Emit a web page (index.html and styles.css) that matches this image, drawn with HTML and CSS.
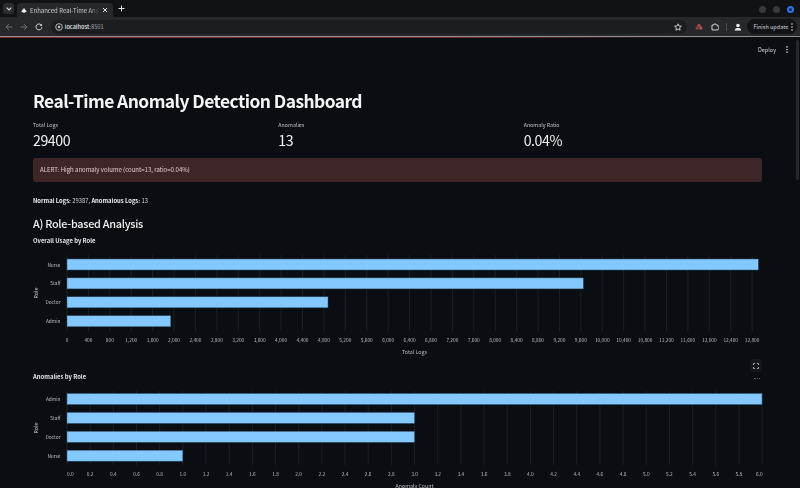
FILE: index.html
```html
<!DOCTYPE html>
<html>
    <head>
        <meta charset="utf-8" />
        <meta name="viewport" content="width=device-width, initial-scale=1.0">
        <title>Enhanced Real-Time Anomaly Detection</title>
        <link rel="stylesheet" href="styles.css">
    </head>
    <body>
        <div class="tabstrip">
            <div class="tablist">
                <svg width="6" height="4" viewBox="0 0 6 4"><path d="M.7.7 3 3l2.3-2.3" fill="none" stroke="#d8dade" stroke-width="1.1"/></svg>
            </div>
            <div class="tab">
                <svg class="favicon" width="6" height="5" viewBox="0 0 6 5"><path d="M3 0 .2 3.6 3 5l2.8-1.4z" fill="#e8e8e8"/></svg>
                <span class="tabtitle">Enhanced Real-Time Ano</span>
                <svg class="tabclose" width="6" height="6" viewBox="0 0 6 6"><path d="m1 1 4 4M5 1 1 5" stroke="#e3e4e6" stroke-width="1"/></svg>
            </div>
            <svg class="newtab" width="7" height="7" viewBox="0 0 7 7"><path d="M3.500.5v6M.5 3.500h6" stroke="#e3e4e6" stroke-width="1"/></svg>
            <div class="winbtns">
                <span class="winbtn"></span>
                <span class="winbtn"></span>
                <span class="winbtn winbtn-on"></span>
            </div>
        </div>

        <div class="toolbar">
            <svg class="navicon" width="8" height="8" viewBox="0 0 8 8"><path d="M7.500 4H1M4 1 1 4l3 3" fill="none" stroke="#6d6f73" stroke-width="1"/></svg>
            <svg class="navicon" width="8" height="8" viewBox="0 0 8 8"><path d="M.5 4H7M4 1l3 3-3 3" fill="none" stroke="#6d6f73" stroke-width="1"/></svg>
            <svg class="navicon" width="8" height="8" viewBox="0 0 8 8"><path d="M6.600 2.400A3 3 0 1 0 7 4.200" fill="none" stroke="#d4d6d9" stroke-width="1"/><path d="M7 .6v2.500H4.600z" fill="#d4d6d9"/></svg>
            <div class="omnibox">
                <svg width="8" height="8" viewBox="0 0 8 8"><circle cx="4" cy="4" r="3.300" fill="none" stroke="#c8cacd" stroke-width=".9"/><circle cx="4" cy="4" r="1.200" fill="#c8cacd"/></svg>
                <span class="url">localhost<span class="urlport">:8501</span></span>
                <svg class="star" width="8" height="8" viewBox="0 0 8 8"><path d="m4 .8 1 2.200 2.400.2-1.800 1.600.5 2.400L4 6 1.900 7.200l.5-2.400L.6 3.200 3 3z" fill="none" stroke="#d4d6d9" stroke-width=".9"/></svg>
            </div>
            <svg class="ext" width="8" height="8" viewBox="0 0 8 8"><circle cx="4" cy="2.300" r="1.700" fill="#a8464a"/><circle cx="2.200" cy="5" r="1.700" fill="#8f3d40"/><circle cx="5.800" cy="5" r="1.700" fill="#b8524f"/></svg>
            <svg class="ext" width="8" height="8" viewBox="0 0 8 8"><path d="M1 2h1.800a1.200 1.200 0 0 1 2.400 0H7v1.800a1.200 1.200 0 0 1 0 2.400V7H1z" fill="none" stroke="#d4d6d9" stroke-width="1"/></svg>
            <span class="toolsep"></span>
            <svg class="profile" width="8" height="8" viewBox="0 0 8 8"><circle cx="4" cy="2.400" r="1.800" fill="#eceef0"/><path d="M.6 7.600C1 5.600 2.400 5 4 5s3 .6 3.400 2.600z" fill="#eceef0"/></svg>
            <div class="finish">
                <span>Finish update</span>
                <svg width="2" height="8" viewBox="0 0 2 8"><circle cx="1" cy="1" r=".8" fill="#d4d6d9"/><circle cx="1" cy="4" r=".8" fill="#d4d6d9"/><circle cx="1" cy="7" r=".8" fill="#d4d6d9"/></svg>
            </div>
        </div>
        <div class="accent"></div>

        <div class="page">
            <div class="apphead">
                <span class="deploy">Deploy</span>
                <svg width="2" height="7" viewBox="0 0 2 7"><circle cx="1" cy=".9" r=".8" fill="#d0d2d5"/><circle cx="1" cy="3.500" r=".8" fill="#d0d2d5"/><circle cx="1" cy="6.100" r=".8" fill="#d0d2d5"/></svg>
            </div>

            <div class="main">
                <h1>Real-Time Anomaly Detection Dashboard</h1>

                <div class="metrics">
                    <div>
                        <div class="metric-label">Total Logs</div>
                        <div class="metric-value">29400</div>
                    </div>
                    <div>
                        <div class="metric-label">Anomalies</div>
                        <div class="metric-value">13</div>
                    </div>
                    <div>
                        <div class="metric-label">Anomaly Ratio</div>
                        <div class="metric-value">0.04%</div>
                    </div>
                </div>

                <div class="alert">ALERT: High anomaly volume (count=13, ratio=0.04%)</div>

                <p class="counts"><b>Normal Logs:</b> 29387, <b>Anomalous Logs:</b> 13</p>

                <h2>A) Role-based Analysis</h2>

                <h4>Overall Usage by Role</h4>
                <div class="chart" id="ChartUsage"></div>

                <div class="chartwrap">
                    <h4>Anomalies by Role</h4>
                    <div class="chartbtn">
                        <svg width="6" height="6" viewBox="0 0 6 6"><path d="M.5 2V.5H2M4 .5h1.500V2M5.500 4v1.500H4M2 5.500H.5V4" fill="none" stroke="#b4b7bb" stroke-width=".9"/></svg>
                    </div>
                    <div class="chartdots"></div>
                    <div class="chart" id="ChartAnomaly"></div>
                </div>
            </div>

            <div class="scrollbar"></div>
        </div>

        <script src="chart.js"></script>
    </body>
</html>
```

FILE: styles.css
```css
*
{
    box-sizing: border-box;
}

html, body
{
    height: 100%;
    margin: 0;
    overflow: hidden;
}

body
{
    font-family: "Noto Sans CJK JP", "Noto Sans", sans-serif;
    background-color: #0a0d11;
    color: #f3f4f6;
    filter: blur(.3px);
}

/* browser chrome */

.tabstrip
{
    display: flex;
    align-items: flex-end;
    height: 17px;
    padding-left: 3px;
    background-color: #111215;
}

.tablist
{
    display: flex;
    align-items: center;
    justify-content: center;
    width: 11px;
    height: 11px;
    margin-bottom: 3px;
    border-radius: 3px;
    background-color: #2b2d30;
}

.tab
{
    display: flex;
    align-items: center;
    width: 96px;
    height: 14px;
    margin-left: 3px;
    padding: 0 5px 0 4px;
    border-radius: 4px 4px 0 0;
    background-color: #26282b;
}

.favicon
{
    margin-right: 3px;
}

.tabtitle
{
    flex: 1;
    overflow: hidden;
    white-space: nowrap;
    font-size: 6px;
    color: #c9cbce;
    -webkit-mask-image: linear-gradient(90deg, #000 85%, transparent 100%);
    mask-image: linear-gradient(90deg, #000 85%, transparent 100%);
}

.tabclose
{
    margin-left: 3px;
}

.newtab
{
    margin: 0 0 5px 5px;
}

.winbtns
{
    display: flex;
    gap: 7px;
    margin-left: auto;
    margin-right: 6px;
    margin-bottom: 4px;
}

.winbtn
{
    width: 7px;
    height: 7px;
    border-radius: 50%;
    background-color: #37393c;
}

.winbtn-on
{
    border: 2px solid #2b74e6;
    background-color: #13294d;
}

.toolbar
{
    display: flex;
    align-items: center;
    height: 19px;
    padding: 0 3px 0 5px;
    background-color: #26282b;
}

.navicon
{
    margin-right: 7px;
}

.omnibox
{
    display: flex;
    align-items: center;
    width: 643px;
    height: 14px;
    margin-left: 1px;
    padding: 0 5px 0 4px;
    border-radius: 7px;
    background-color: #1b1d20;
}

.url
{
    margin-left: 2px;
    font-size: 5.600px;
    font-weight: 500;
    color: #e6e8ea;
}

.urlport
{
    color: #8d8f93;
}

.star
{
    margin-left: auto;
}

.ext
{
    margin-left: 8px;
}

.toolsep
{
    width: 1px;
    height: 8px;
    margin-left: 7px;
    background-color: #4a4c50;
}

.profile
{
    margin-left: 7px;
}

.finish
{
    display: flex;
    align-items: center;
    justify-content: space-between;
    width: 50px;
    height: 15px;
    margin-left: 6px;
    padding: 0 4px 0 6px;
    border-radius: 8px;
    background-color: #111316;
    white-space: nowrap;
    font-size: 5.500px;
    color: #d4d6d9;
}

.accent
{
    height: 2px;
    border-top: 1px solid #8e9094;
    background: linear-gradient(90deg, #8a2a25 0%, #7a2a25 55%, #2a1b1b 80%, #0a0d11 100%);
}

/* page */

.page
{
    position: relative;
    height: 450px;
    overflow: hidden;
}

.apphead
{
    display: flex;
    align-items: center;
    justify-content: flex-end;
    gap: 10px;
    height: 21px;
    padding: 2px 12px 0 0;
}

.deploy
{
    font-size: 5.500px;
    color: #d8dadc;
}

.main
{
    padding: 28px 38px 0 33px;
}

h1
{
    margin: 0;
    font-size: 17.400px;
    font-weight: 700;
    letter-spacing: -.55px;
    line-height: 28px;
    color: #f4f5f6;
}

.metrics
{
    display: grid;
    grid-template-columns: repeat(3, 1fr);
    width: 736px;
    margin-top: 5px;
}

.metric-label
{
    font-size: 5.300px;
    line-height: 10px;
    color: #bfc2c7;
}

.metric-value
{
    font-size: 14.200px;
    letter-spacing: -.45px;
    line-height: 21px;
    color: #f0f1f3;
}

.alert
{
    height: 24px;
    margin-top: 7px;
    padding-left: 7px;
    border-radius: 3px;
    background-color: #3e2528;
    font-size: 6px;
    line-height: 24px;
    color: #e2c9c9;
}

.counts
{
    margin: 13px 0 0;
    font-size: 5.830px;
    line-height: 11px;
    color: #d8dadd;
}

.counts b
{
    font-weight: 700;
    color: #eceef0;
}

h2
{
    margin: 9px 0 0;
    font-size: 10.800px;
    font-weight: 500;
    letter-spacing: -.25px;
    line-height: 17px;
    color: #f0f1f3;
}

h4
{
    margin: 3px 0 0;
    font-size: 5.900px;
    font-weight: 700;
    line-height: 11px;
    color: #e2e4e7;
}

.chart
{
    margin-top: 6px;
}

.chart svg
{
    display: block;
    overflow: visible;
}

.chartwrap
{
    position: relative;
    margin-top: 19px;
}

.chartbtn
{
    position: absolute;
    right: 0;
    top: -12px;
    display: flex;
    align-items: center;
    justify-content: center;
    width: 12px;
    height: 13px;
    border-radius: 3px;
    background-color: #13161a;
}

.chartdots
{
    position: absolute;
    right: 2px;
    top: 7px;
    width: 6px;
    border-top: 1px dotted #555a60;
}

.scrollbar
{
    position: absolute;
    right: 1px;
    top: 2px;
    width: 3px;
    height: 140px;
    border-radius: 2px;
    background-color: #24272b;
}

/* chart parts, svg attributes come from chart.js */

.grid
{
    stroke: #1c2026;
    stroke-width: 1;
}

.bar
{
    fill: #83c9ff;
    stroke: #34536d;
    stroke-width: .5;
}

.ticktxt
{
    font-size: 4.800px;
    fill: #bcbfc3;
}

.axistxt
{
    font-size: 5.300px;
    fill: #bcbfc3;
}

.roletxt
{
    font-size: 5.300px;
    fill: #c3c6ca;
}
```

FILE: chart.js
```js
var SVGNS = "http://www.w3.org/2000/svg";

function Add(Parent, Tag, Attr, Text)
{
    var El = document.createElementNS(SVGNS, Tag);
    for (var K in Attr)
    {
        El.setAttribute(K, Attr[K]);
    }
    if (Text)
    {
        El.textContent = Text;
    }
    Parent.appendChild(El);
    return El;
}

// all x and y are relative to the chart box, which starts at page x=33
function DrawChart(Id, C)
{
    var Svg = Add(document.getElementById(Id), "svg", { width: 729, height: C.H });
    var X0 = 34;

    for (var I = 0; I < C.Ticks.length; I++)
    {
        var X = X0 + I * C.Step;
        Add(Svg, "line", { "class": "grid", x1: X, x2: X, y1: C.GridTop, y2: C.GridBot });
        var Lx = X;
        var Anchor = "middle";
        if (I == 0 && C.Ticks[0].length > 1)
        {
            Anchor = "start";
        }
        if (I == C.Ticks.length - 1 && C.Clamp)
        {
            Lx = X + 0.5;
            Anchor = "end";
        }
        Add(Svg, "text", { "class": "ticktxt", x: Lx, y: C.GridBot + 11, "text-anchor": Anchor }, C.Ticks[I]);
    }

    for (var R = 0; R < C.Rows.length; R++)
    {
        var Y = C.BarTop + R * 18.9;
        Add(Svg, "rect", { "class": "bar", x: X0, y: Y, width: C.Rows[R][1], height: 11 });
        Add(Svg, "text", { "class": "ticktxt", x: X0 - 6.5, y: Y + 7.5, "text-anchor": "end" }, C.Rows[R][0]);
    }

    Add(Svg, "text", { "class": "axistxt", x: 381.5, y: C.GridBot + 23, "text-anchor": "middle" }, C.Title);
    var My = (C.GridTop + C.GridBot) / 2;
    Add(Svg, "text", { "class": "roletxt", x: 3, y: My + 2, "text-anchor": "middle", transform: "rotate(-90 3 " + My + ")" }, "Role");
}

function MakeTicks(Count, Fn)
{
    var A = [];
    for (var I = 0; I < Count; I++)
    {
        A.push(Fn(I));
    }
    return A;
}

DrawChart("ChartUsage", {
    H: 100, GridTop: 3, GridBot: 79, BarTop: 7, Step: 21.41,
    Title: "Total Logs",
    Rows: [["Nurse", 691.3], ["Staff", 516.3], ["Doctor", 261], ["Admin", 103.7]],
    Ticks: MakeTicks(33, function (I) { return (I * 400).toLocaleString("en-US"); })
});

DrawChart("ChartAnomaly", {
    H: 100, GridTop: 3, GridBot: 77, BarTop: 5.5, Step: 23.17, Clamp: true,
    Title: "Anomaly Count",
    Rows: [["Admin", 695], ["Staff", 347.5], ["Doctor", 347.5], ["Nurse", 115.8]],
    Ticks: MakeTicks(31, function (I) { return (I * 0.2).toFixed(1); })
});
```
